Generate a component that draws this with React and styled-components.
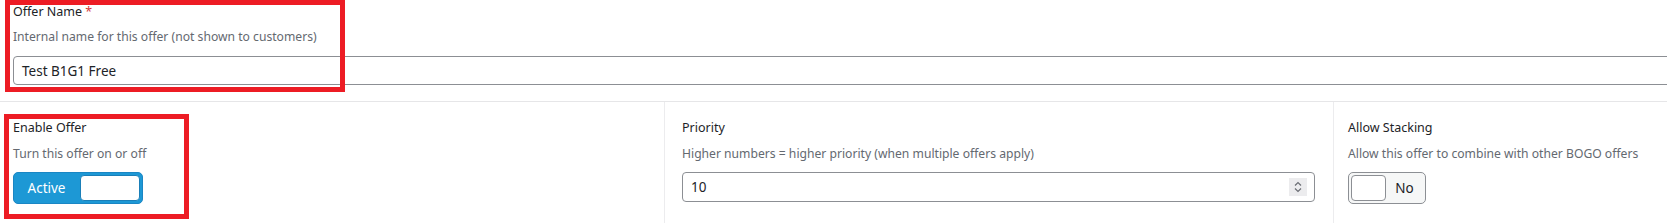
import React from "react";
import styled, { createGlobalStyle } from "styled-components";

const GlobalStyle = createGlobalStyle`
  html, body {
    margin: 0;
    padding: 0;
    background: #ffffff;
  }
  body {
    font-family: "Noto Sans", "Open Sans", sans-serif;
    font-size: 13px;
    color: #1d2327;
    overflow: hidden;
  }
`;

const Page = styled.div`
  position: relative;
  width: 1667px;
  height: 223px;
`;

const NameSection = styled.section`
  padding: 2px 0 16px 13px;
  border-bottom: 1px solid #e6e6e8;
`;

const Label = styled.div`
  line-height: 20px;
  font-size: 12.5px;
  color: #1d2327;
`;

const Required = styled.span`
  color: #d63638;
`;

const Desc = styled.div`
  margin-top: ${(p) => p.$gap || 3}px;
  line-height: 20px;
  font-size: 12.15px;
  color: #646970;
`;

const TextInput = styled.div`
  margin-top: 9px;
  height: 27px;
  width: 1680px;
  border: 1px solid #8c8f94;
  border-radius: 4px;
  padding-left: 8px;
  display: flex;
  align-items: center;
  font-size: 13.5px;
  color: #1d2327;
`;

const Grid = styled.div`
  display: grid;
  grid-template-columns: 665px 669px 1fr;
  border-bottom: 1px solid #e6e6e8;
`;

const Cell = styled.div`
  padding: 16px 0 20px ${(p) => p.$pad || 14}px;
  border-right: ${(p) => (p.$last ? "none" : "1px solid #ececee")};
`;

const Toggle = styled.div`
  margin-top: 8px;
  box-sizing: border-box;
  width: ${(p) => p.$w}px;
  height: 32px;
  border-radius: 5px;
  border: 1px solid ${(p) => (p.$on ? "#1a86c4" : "#8c8f94")};
  background: ${(p) => (p.$on ? "#1d98d5" : "#f6f7f7")};
  display: flex;
  flex-direction: ${(p) => (p.$on ? "row" : "row-reverse")};
  align-items: center;
  justify-content: space-between;
  padding: 2px;
`;

const ToggleText = styled.span`
  flex: 1;
  text-align: center;
  font-size: 13.5px;
  color: ${(p) => (p.$on ? "#ffffff" : "#1d2327")};
  padding-right: ${(p) => (p.$on ? 3 : 0)}px;
`;

const Knob = styled.span`
  box-sizing: border-box;
  width: ${(p) => p.$w}px;
  height: 26px;
  background: #ffffff;
  border: 1px solid ${(p) => (p.$on ? "#1a7fb8" : "#8c8f94")};
  border-radius: 4px;
`;

const NumberInput = styled.div`
  position: relative;
  margin-top: 8px;
  box-sizing: border-box;
  width: 633px;
  height: 30px;
  border: 1px solid #8c8f94;
  border-radius: 4px;
  padding-left: 8px;
  display: flex;
  align-items: center;
  font-size: 13.5px;
  color: #1d2327;
`;

const Spinner = styled.span`
  position: absolute;
  right: 7px;
  top: 5px;
  width: 18px;
  height: 18px;
  background: #ececee;
  display: flex;
  align-items: center;
  justify-content: center;
`;

const Marker = styled.div`
  position: absolute;
  left: ${(p) => p.$x}px;
  top: ${(p) => p.$y}px;
  width: ${(p) => p.$w}px;
  height: ${(p) => p.$h}px;
  box-sizing: border-box;
  border: 5px solid #ed1c24;
  pointer-events: none;
`;

export default function App() {
  return (
    <Page>
      <GlobalStyle />
      <NameSection>
        <Label>
          Offer Name <Required>*</Required>
        </Label>
        <Desc $gap={5}>Internal name for this offer (not shown to customers)</Desc>
        <TextInput>Test B1G1 Free</TextInput>
      </NameSection>
      <Grid>
        <Cell $pad={13}>
          <Label>Enable Offer</Label>
          <Desc $gap={6}>Turn this offer on or off</Desc>
          <Toggle $on $w={130}>
            <ToggleText $on>Active</ToggleText>
            <Knob $on $w={60} />
          </Toggle>
        </Cell>
        <Cell $pad={17}>
          <Label>Priority</Label>
          <Desc $gap={6}>
            Higher numbers = higher priority (when multiple offers apply)
          </Desc>
          <NumberInput>
            10
            <Spinner>
              <svg width="10" height="14" viewBox="0 0 10 14" fill="none" stroke="#6b6e74" strokeWidth="1.2">
                <path d="M2 5.5 L5 2.5 L8 5.5" />
                <path d="M2 8.5 L5 11.5 L8 8.5" />
              </svg>
            </Spinner>
          </NumberInput>
        </Cell>
        <Cell $pad={14} $last>
          <Label>Allow Stacking</Label>
          <Desc $gap={6}>Allow this offer to combine with other BOGO offers</Desc>
          <Toggle $w={78}>
            <ToggleText>No</ToggleText>
            <Knob $w={35} />
          </Toggle>
        </Cell>
      </Grid>
      <Marker $x={5} $y={0} $w={340} $h={92} />
      <Marker $x={4} $y={114} $w={185} $h={105} />
    </Page>
  );
}
